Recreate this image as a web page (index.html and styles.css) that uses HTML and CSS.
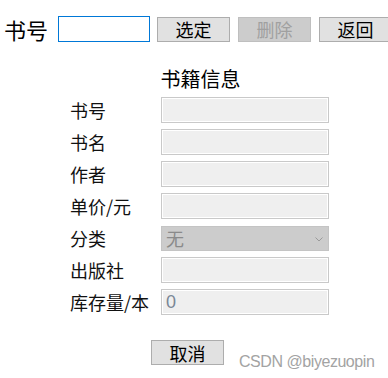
FILE: index.html
```html
<!DOCTYPE html>
<html lang="zh-CN">
<head>
<meta charset="utf-8">
<title>书籍信息</title>
<link rel="stylesheet" href="styles.css">
</head>
<body>
<div class="top">
  <span class="top-label">书号</span>
  <input class="id-input" type="text">
  <button class="btn first">选定</button>
  <button class="btn" disabled>删除</button>
  <button class="btn">返回</button>
</div>
<div class="form">
  <div class="title">书籍信息</div>
  <label class="label">书号</label><input class="field" type="text" disabled>
  <label class="label">书名</label><input class="field" type="text" disabled>
  <label class="label">作者</label><input class="field" type="text" disabled>
  <label class="label">单价/元</label><input class="field" type="text" disabled>
  <label class="label">分类</label>
  <div class="select-wrap">
    <select class="select" disabled><option>无</option></select>
    <svg class="chevron" width="8" height="5" viewBox="0 0 8 5"><path d="M0.5 0.5 L4 4 L7.5 0.5" fill="none" stroke="#9a9a9a" stroke-width="1"/></svg>
  </div>
  <label class="label">出版社</label><input class="field" type="text" disabled>
  <label class="label">库存量/本</label><input class="field num" type="text" value="0" disabled>
</div>
<button class="btn cancel">取消</button>
<div class="watermark">CSDN @biyezuopin</div>
</body>
</html>
```
FILE: styles.css
```css
html, body {
  margin: 0;
  padding: 0;
  background: #fff;
  overflow: hidden;
}
body {
  font-family: "Noto Sans CJK SC", sans-serif;
  color: #000;
  width: 388px;
  height: 378px;
  position: relative;
}
.top {
  display: flex;
  align-items: center;
  padding: 16px 0 0 4px;
  height: 26px;
  white-space: nowrap;
}
.top-label {
  font-size: 22px;
  line-height: 26px;
  width: 54px;
  flex-shrink: 0;
}
.id-input {
  box-sizing: border-box;
  width: 92px;
  height: 26px;
  margin: 0;
  padding: 0 3px;
  border: 1px solid #0078d7;
  outline: none;
  background: #fff;
  flex-shrink: 0;
}
.btn {
  box-sizing: border-box;
  width: 73px;
  height: 25px;
  margin: 0 0 0 8px;
  padding: 0;
  border: 1px solid #adadad;
  background: #e1e1e1;
  color: #000;
  font-family: "Noto Sans CJK SC", sans-serif;
  font-size: 18px;
  line-height: 22px;
  flex-shrink: 0;
  border-radius: 0;
}
.btn.first {
  margin-left: 7px;
}
.btn:disabled {
  background: #cccccc;
  border-color: #bfbfbf;
  color: #a0a0a0;
}
.form {
  display: grid;
  grid-template-columns: 91px 168px;
  row-gap: 6px;
  margin: 24px 0 0 70px;
  align-items: center;
}
.title {
  grid-column: 1 / -1;
  text-align: center;
  font-size: 20px;
  line-height: 25px;
  padding-left: 2px;
}
.label {
  font-size: 18px;
  line-height: 26px;
  white-space: nowrap;
  color: #111;
}
.field {
  box-sizing: border-box;
  width: 168px;
  height: 26px;
  margin: 0;
  padding: 0 4px;
  border: 1px solid #c9c9c9;
  box-shadow: inset 0 0 0 1px #fff;
  background: #efefef;
  font-family: "Liberation Sans", sans-serif;
  font-size: 18px;
}
.field.num {
  color: #7a8796;
  -webkit-text-fill-color: #7a8796;
  opacity: 1;
}
.select-wrap {
  position: relative;
  width: 168px;
  height: 25px;
}
.select {
  -webkit-appearance: none;
  appearance: none;
  box-sizing: border-box;
  width: 168px;
  height: 25px;
  margin: 0;
  padding: 0 4px;
  border: 1px solid #c4c4c4;
  border-radius: 0;
  background: #cccccc;
  color: #8a8a8a;
  opacity: 1;
  font-family: "Noto Sans CJK SC", sans-serif;
  font-size: 18px;
  line-height: 23px;
}
.chevron {
  position: absolute;
  left: 154px;
  top: 11px;
}
.cancel {
  display: block;
  margin: 25px 0 0 151px;
}
.watermark {
  position: absolute;
  left: 239px;
  top: 353px;
  font-family: "Liberation Sans", sans-serif;
  font-size: 16px;
  line-height: 18px;
  letter-spacing: -0.45px;
  color: #a3a3a3;
  white-space: nowrap;
}
```
